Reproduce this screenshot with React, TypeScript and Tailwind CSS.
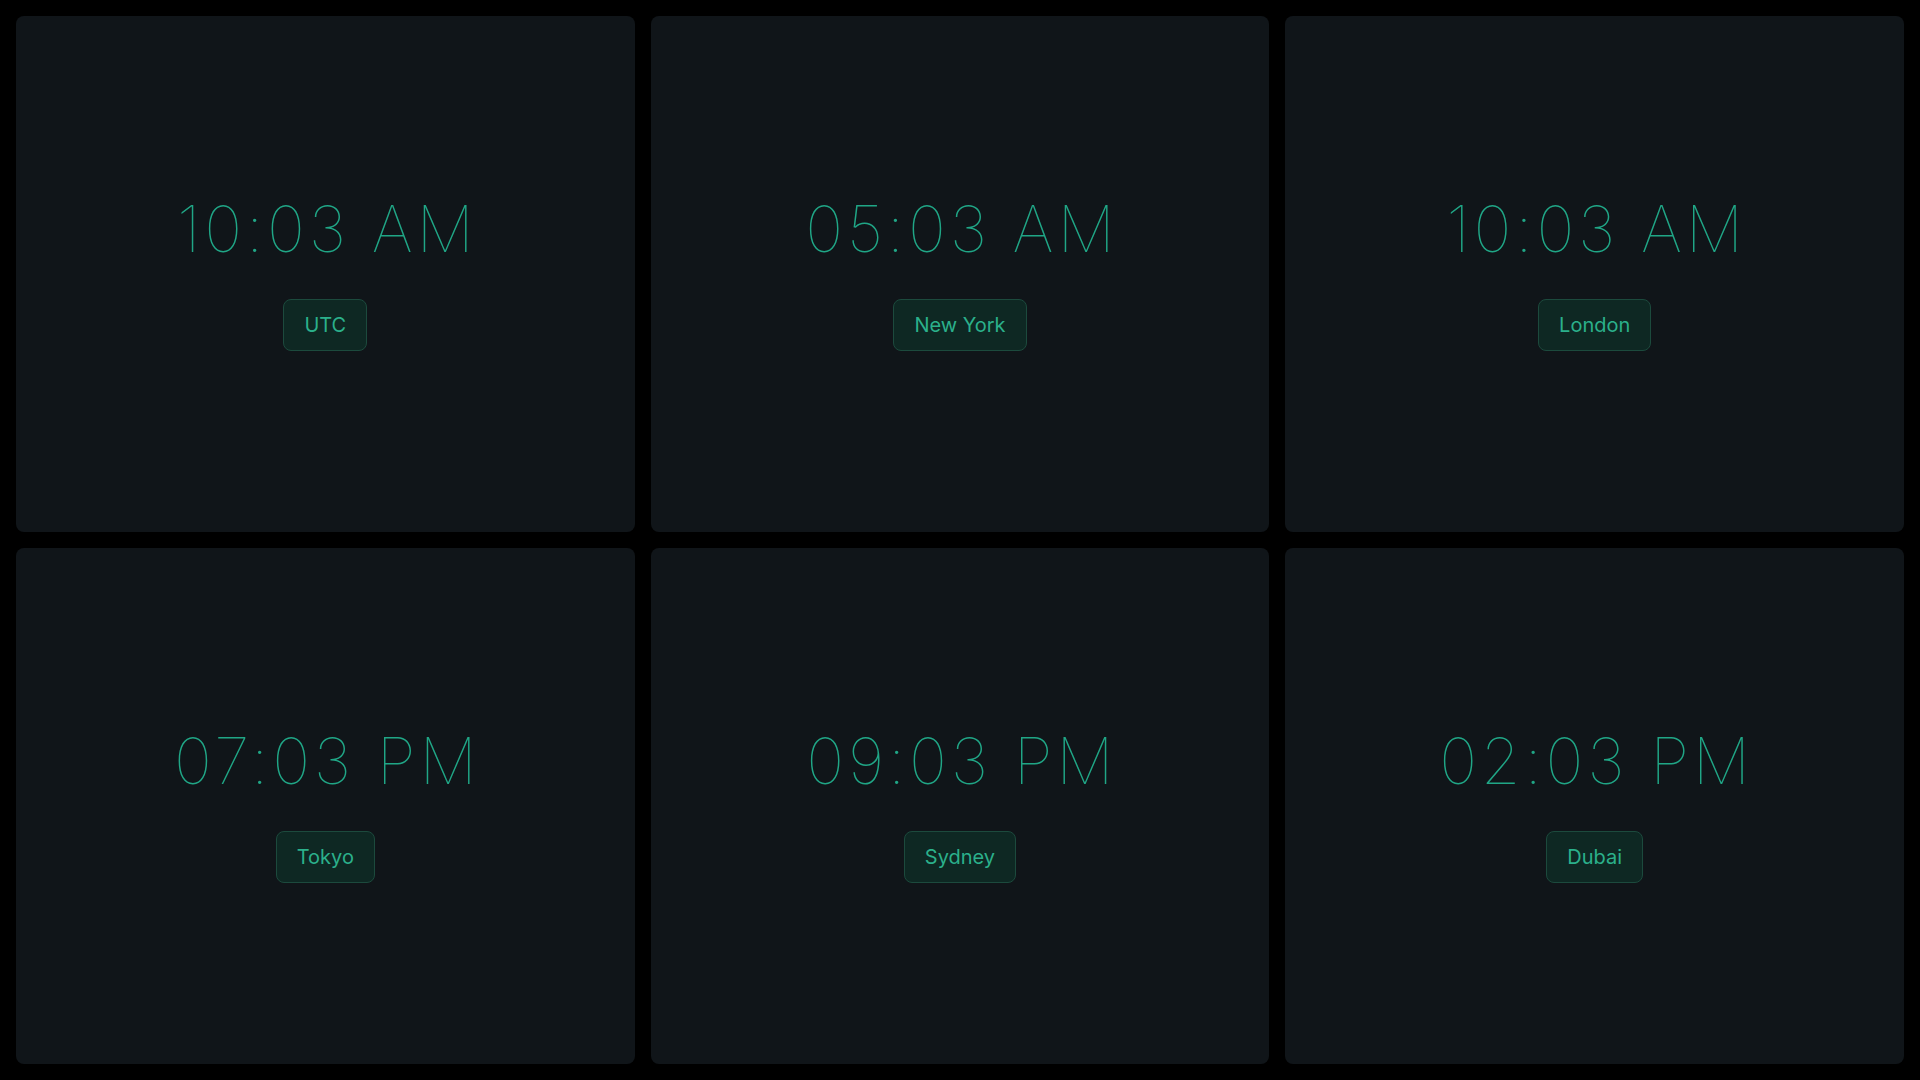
const clocks = [
  { time: "10:03 AM", city: "UTC" },
  { time: "05:03 AM", city: "New York" },
  { time: "10:03 AM", city: "London" },
  { time: "07:03 PM", city: "Tokyo" },
  { time: "09:03 PM", city: "Sydney" },
  { time: "02:03 PM", city: "Dubai" },
];

function ClockCard({ time, city }: { time: string; city: string }) {
  return (
    <div className="flex flex-col items-center justify-center rounded-lg bg-[#101519]">
      <div className="text-[64px] leading-none font-thin tracking-[0.06em] pl-[0.06em] text-[#20a686]">
        {time}
      </div>
      <div className="mt-[38px] h-[52px] px-5 flex items-center rounded-lg border border-[#1c4a3d] bg-[#0e2823] text-xl text-[#2bb08b]">
        {city}
      </div>
    </div>
  );
}

export default function App() {
  return (
    <div
      className="h-screen w-full bg-black p-4 grid grid-cols-3 grid-rows-2 gap-4"
      style={{ fontFamily: "Inter, 'Noto Sans', sans-serif" }}
    >
      {clocks.map((c, i) => (
        <ClockCard key={i} time={c.time} city={c.city} />
      ))}
    </div>
  );
}
